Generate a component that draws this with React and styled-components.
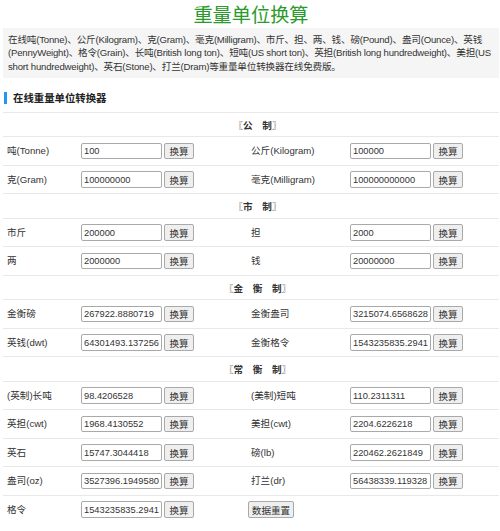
import React from 'react';
import styled, { createGlobalStyle } from 'styled-components';

const GlobalStyle = createGlobalStyle`
  html, body {
    margin: 0;
    padding: 0;
    background: #fff;
  }
  body {
    font-family: "Liberation Sans", "Noto Sans CJK SC", sans-serif;
    color: #333;
  }
`;

const Page = styled.div`
  width: 496px;
  margin-left: 3px;
`;

const Title = styled.h1`
  margin: 0;
  padding-top: 4px;
  height: 24px;
  line-height: 24px;
  text-align: center;
  font-size: 19.2px;
  font-weight: 400;
  color: #2a9a2a;
`;

const Intro = styled.p`
  margin: 0;
  padding: 5px 5px;
  background: #f5f5f5;
  font-size: 9.6px;
  line-height: 13.3px;
  letter-spacing: -0.2px;
  color: #333;
`;

const Heading = styled.h2`
  display: flex;
  align-items: center;
  gap: 6px;
  margin: 10px 0 4px;
  height: 20px;
  font-size: 10.4px;
  font-weight: 700;
  color: #222;

  &::before {
    content: '';
    display: block;
    width: 3px;
    height: 12px;
    margin-left: 1px;
    background: #2196f3;
  }
`;

const Table = styled.div`
  display: flex;
  flex-direction: column;
  font-size: 9.6px;
`;

const SectionRow = styled.div`
  box-sizing: border-box;
  height: 24.5px;
  border-top: 1px solid #e8e8e8;
  display: flex;
  align-items: center;
  justify-content: center;
  padding-left: 13px;
  font-weight: 700;
  color: #333;
`;

const DataRow = styled.div`
  box-sizing: border-box;
  height: 28.5px;
  border-top: 1px solid #e8e8e8;
  display: grid;
  grid-template-columns: 78px 166px 103px 1fr;
  align-items: center;
`;

const Label = styled.div`
  padding-left: 4px;
  margin-top: -2px;
  white-space: nowrap;
`;

const Cell = styled.div`
  display: flex;
  align-items: center;
  gap: 2px;
`;

const Input = styled.input`
  box-sizing: border-box;
  width: 81px;
  height: 16.5px;
  margin: 0;
  padding: 0 1px 0 2px;
  border: 1px solid #a9a9a9;
  border-radius: 2px;
  font-family: inherit;
  font-size: 9.3px;
  color: #333;
  background: #fff;
`;

const Button = styled.button`
  box-sizing: border-box;
  height: 16.5px;
  width: ${(p) => p.$w || '30px'};
  margin: 0;
  padding: 0;
  border: 1px solid #a9a9a9;
  border-radius: 2px;
  background: #efefef;
  font-family: inherit;
  font-size: 9.6px;
  color: #333;
`;

const Reset = styled(Button)`
  margin-left: 1px;
`;

const sections = [
  {
    title: '〖公\u3000制〗',
    rows: [
      [['吨(Tonne)', '100'], ['公斤(Kilogram)', '100000']],
      [['克(Gram)', '100000000'], ['毫克(Milligram)', '100000000000']],
    ],
  },
  {
    title: '〖市\u3000制〗',
    rows: [
      [['市斤', '200000'], ['担', '2000']],
      [['两', '2000000'], ['钱', '20000000']],
    ],
  },
  {
    title: '〖金\u3000衡\u3000制〗',
    rows: [
      [['金衡磅', '267922.8880719'], ['金衡盎司', '3215074.6568628']],
      [['英钱(dwt)', '64301493.137256'], ['金衡格令', '1543235835.2941']],
    ],
  },
  {
    title: '〖常\u3000衡\u3000制〗',
    rows: [
      [['(英制)长吨', '98.4206528'], ['(美制)短吨', '110.2311311']],
      [['英担(cwt)', '1968.4130552'], ['美担(cwt)', '2204.6226218']],
      [['英石', '15747.3044418'], ['磅(lb)', '220462.2621849']],
      [['盎司(oz)', '3527396.1949580'], ['打兰(dr)', '56438339.119328']],
      [['格令', '1543235835.2941'], null],
    ],
  },
];

const Unit = ({ label, value }) => (
  <>
    <Label>{label}</Label>
    <Cell>
      <Input defaultValue={value} />
      <Button>换算</Button>
    </Cell>
  </>
);

export default function App() {
  return (
    <Page>
      <GlobalStyle />
      <Title>重量单位换算</Title>
      <Intro>
        在线吨(Tonne)、公斤(Kilogram)、克(Gram)、毫克(Milligram)、市斤、担、两、钱、磅(Pound)、盎司(Ounce)、英钱(PennyWeight)、格令(Grain)、长吨(British
        long ton)、短吨(US short ton)、英担(British long hundredweight)、美担(US short
        hundredweight)、英石(Stone)、打兰(Dram)等重量单位转换器在线免费版。
      </Intro>
      <Heading>在线重量单位转换器</Heading>
      <Table>
        {sections.map((s) => (
          <React.Fragment key={s.title}>
            <SectionRow>{s.title}</SectionRow>
            {s.rows.map(([a, b]) => (
              <DataRow key={a[0]}>
                <Unit label={a[0]} value={a[1]} />
                {b ? (
                  <Unit label={b[0]} value={b[1]} />
                ) : (
                  <Cell>
                    <Reset $w="46px">数据重置</Reset>
                  </Cell>
                )}
              </DataRow>
            ))}
          </React.Fragment>
        ))}
      </Table>
    </Page>
  );
}
